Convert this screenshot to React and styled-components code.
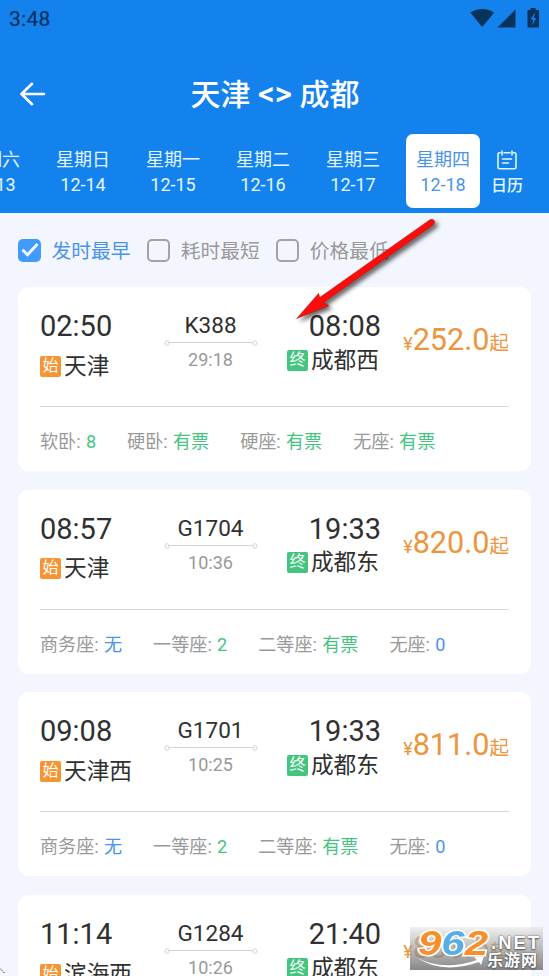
import React, { useState } from 'react';
import styled, { createGlobalStyle, ThemeProvider } from 'styled-components';

const theme = {
  color: {
    primary: '#1482ed',
    check: '#409bfd',
    link: '#4a94e8',
    page: '#f3f6ff',
    text: '#303030',
    grey: '#999999',
    orange: '#f79432',
    price: '#ed953c',
    green: '#43c57f',
    status: '#08335d',
  },
};

const days = [
  { week: '星期六', date: '12-13' },
  { week: '星期日', date: '12-14' },
  { week: '星期一', date: '12-15' },
  { week: '星期二', date: '12-16' },
  { week: '星期三', date: '12-17' },
  { week: '星期四', date: '12-18' },
];

const filters = ['发时最早', '耗时最短', '价格最低'];

const trains = [
  {
    code: 'K388',
    start: '02:50',
    end: '08:08',
    from: '天津',
    to: '成都西',
    duration: '29:18',
    price: '252.0',
    seats: [
      ['软卧', '8'],
      ['硬卧', '有票'],
      ['硬座', '有票'],
      ['无座', '有票'],
    ],
  },
  {
    code: 'G1704',
    start: '08:57',
    end: '19:33',
    from: '天津',
    to: '成都东',
    duration: '10:36',
    price: '820.0',
    seats: [
      ['商务座', '无'],
      ['一等座', '2'],
      ['二等座', '有票'],
      ['无座', '0'],
    ],
  },
  {
    code: 'G1701',
    start: '09:08',
    end: '19:33',
    from: '天津西',
    to: '成都东',
    duration: '10:25',
    price: '811.0',
    seats: [
      ['商务座', '无'],
      ['一等座', '2'],
      ['二等座', '有票'],
      ['无座', '0'],
    ],
  },
  {
    code: 'G1284',
    start: '11:14',
    end: '21:40',
    from: '滨海西',
    to: '成都东',
    duration: '10:26',
    price: '803.5',
    seats: [
      ['商务座', '无'],
      ['一等座', '2'],
      ['二等座', '有票'],
      ['无座', '0'],
    ],
  },
];

const StatusIcons = () => (
  <svg width="72" height="24" viewBox="0 0 72 24" fill={theme.color.status}>
    <path d="M1.500 4.700C8-.2 18.500-.2 25 4.700L13.200 19Z" />
    <path d="M28.500 19.400H46.500V1.600Z" />
    <path d="M61.500 0h5v2h3.500v17.500H58.500V2h3Z" />
    <path d="M65.500 5L61.500 11.500h2.700l-1 6 4-7.500h-2.600l1.400-5Z" fill={theme.color.primary} />
  </svg>
);

const BackIcon = () => (
  <svg width="26" height="24" viewBox="0 0 26 24" fill="none" stroke="#fff" strokeWidth="2.6" strokeLinecap="round" strokeLinejoin="round">
    <path d="M24 12H2M12 1.800L1.500 12L12 22.200" />
  </svg>
);

const CalendarIcon = () => (
  <svg width="20" height="20" viewBox="0 0 20 20" fill="none" stroke="#e4f6ff" strokeWidth="1.6" strokeLinecap="round">
    <path d="M3.200 2.800H2.500Q1 2.800 1 4.300V17Q1 18.700 2.700 18.700H17.300Q19 18.700 19 17V4.300Q19 2.800 17.500 2.800H16.500M7 2.800H13" />
    <path d="M5 1V5M15 1V5M5.500 9H14.500M5.500 13H11.500" />
  </svg>
);

const RouteLine = () => (
  <svg width="94" height="8" viewBox="0 0 94 8" fill="#fff" stroke="#d4d4d4">
    <path d="M4 3.500H90" />
    <ellipse cx="3" cy="4" rx="2" ry="2.300" />
    <ellipse cx="91" cy="4" rx="2" ry="2.300" />
  </svg>
);

const Arrow = () => (
  <PointerArrow width="170" height="130" viewBox="280 210 170 130">
    <path
      d="M430.300 219.400Q433.500 218.400 434.600 221.300Q435.100 223.400 433.200 224.900L324 302.300L328.700 305.800L296.700 318.500L318.700 293.300L319.600 297.600Z"
      fill="#fb0d0d"
      stroke="#a81512"
      strokeWidth="0.5"
    />
  </PointerArrow>
);

const seatColor = (count) => (count === '无' || count === '0' ? theme.color.link : theme.color.green);

const TrainCard = ({ train }) => (
  <Card>
    <Trip>
      <Departure>
        <Time>{train.start}</Time>
        <Station $top={10}>
          <Tag $bg={theme.color.orange}>始</Tag>
          <StationName>{train.from}</StationName>
        </Station>
      </Departure>
      <Route>
        <Code>{train.code}</Code>
        <RouteLine />
        <Duration>{train.duration}</Duration>
      </Route>
      <Arrival>
        <Time>{train.end}</Time>
        <Station $top={4}>
          <Tag $bg={theme.color.green}>终</Tag>
          <StationName>{train.to}</StationName>
        </Station>
      </Arrival>
      <Price>
        <Small>¥</Small>
        {train.price}
        <Suffix>起</Suffix>
      </Price>
    </Trip>
    <Seats>
      {train.seats.map(([name, count]) => (
        <Seat key={name}>
          {name}: <Count $color={seatColor(count)}>{count}</Count>
        </Seat>
      ))}
    </Seats>
  </Card>
);

const App = () => {
  const [day, setDay] = useState('12-18');
  const [filter, setFilter] = useState('发时最早');

  return (
    <ThemeProvider theme={theme}>
      <GlobalStyle />
      <Screen>
        <Header>
          <StatusBar>
            <Clock>3:48</Clock>
            <StatusIcons />
          </StatusBar>
          <TitleBar>
            <BackIcon />
            <Title>
              天津 <Swap>&lt;&gt;</Swap> 成都
            </Title>
          </TitleBar>
          <DateBar>
            <DayList>
              {days.map((item) => (
                <Day key={item.date} $active={item.date === day} onClick={() => setDay(item.date)}>
                  <span>{item.week}</span>
                  <DayDate>{item.date}</DayDate>
                </Day>
              ))}
            </DayList>
            <CalendarButton>
              <CalendarIcon />
              日历
            </CalendarButton>
          </DateBar>
        </Header>
        <Filters>
          {filters.map((name) => (
            <Filter key={name} $active={name === filter} onClick={() => setFilter(name)}>
              <Box $active={name === filter}>
                {name === filter ? (
                  <svg width="18" height="16" viewBox="0 0 18 16" fill="none" stroke="#fff" strokeWidth="2.8">
                    <path d="M1.500 7.800L6.500 12.800L16.500 2" />
                  </svg>
                ) : null}
              </Box>
              <FilterName>{name}</FilterName>
            </Filter>
          ))}
        </Filters>
        <List>
          {trains.map((train) => (
            <TrainCard key={train.code} train={train} />
          ))}
        </List>
        <Arrow />
        <Watermark>
          <Brand>
            <Digit $color="#f7902c">9</Digit>
            <Digit $color="#55aee6">6</Digit>
            <Digit $color="#f7902c">2</Digit>
          </Brand>
          <Swoosh width="70" height="14" viewBox="0 0 70 14">
            <path d="M1 1Q27 16 62 4L59 1L69 0L66 9L64 6Q27 19 1 1Z" fill="#fff" />
          </Swoosh>
          <Net>.NET</Net>
          <SiteName>乐游网</SiteName>
        </Watermark>
        <Corner width="5" height="8" viewBox="0 0 5 8">
          <path d="M0 .5L4.500 5" stroke="#222" strokeDasharray="1.500 1" />
        </Corner>
      </Screen>
    </ThemeProvider>
  );
};
export default App;

const GlobalStyle = createGlobalStyle`
  * {
    box-sizing: border-box;
  }
  body {
    margin: 0;
    overflow: hidden;
    font-family: Roboto, 'Noto Sans CJK SC', sans-serif;
  }
  svg {
    display: block;
    flex-shrink: 0;
  }
`;

const Screen = styled.div`
  position: relative;
  width: 549px;
  height: 976px;
  overflow: hidden;
  background-color: ${({ theme }) => theme.color.page};
`;

const Header = styled.header`
  height: 213px;
  background-color: ${({ theme }) => theme.color.primary};
`;

const StatusBar = styled.div`
  display: flex;
  justify-content: space-between;
  height: 54px;
  padding: 8px 8px 0 9px;
`;

const Clock = styled.span`
  font-size: 21px;
  line-height: 23px;
  letter-spacing: 0.3px;
  color: ${({ theme }) => theme.color.status};
  -webkit-text-stroke: 0.2px ${({ theme }) => theme.color.status};
`;

const TitleBar = styled.div`
  display: flex;
  align-items: center;
  height: 80px;
  padding-left: 20px;
`;

const Title = styled.h1`
  flex: 1;
  margin: 2px 45px 0 0;
  font-size: 30px;
  font-weight: 500;
  line-height: 40px;
  text-align: center;
  color: #fff;
`;

const Swap = styled.span`
  font-size: 33px;
  line-height: 30px;
`;

const DateBar = styled.div`
  display: flex;
  height: 74px;
`;

const DayList = styled.div`
  display: flex;
  justify-content: flex-end;
  gap: 16px;
  width: 480px;
  overflow: hidden;
`;

const Day = styled.div`
  display: flex;
  flex-direction: column;
  flex-shrink: 0;
  align-items: center;
  width: 74px;
  height: 74px;
  padding-top: 13px;
  border-radius: 7px;
  font-size: 18px;
  line-height: 26px;
  cursor: pointer;
  color: ${({ $active, theme }) => ($active ? theme.color.link : '#e4f6ff')};
  background-color: ${({ $active }) => ($active ? '#fff' : 'transparent')};
`;

const DayDate = styled.span`
  line-height: 24px;
`;

const CalendarButton = styled.div`
  display: flex;
  flex-direction: column;
  align-items: center;
  width: 54px;
  padding-top: 16px;
  font-size: 16px;
  font-weight: 500;
  line-height: 32px;
  color: #e4f6ff;
`;

const Filters = styled.div`
  display: flex;
  gap: 16.5px;
  height: 74px;
  padding: 0 18px;
  align-items: center;
`;

const Filter = styled.div`
  display: flex;
  align-items: center;
  gap: 10.5px;
  line-height: 28px;
  cursor: pointer;
  color: ${({ $active, theme }) => ($active ? theme.color.link : theme.color.grey)};
`;

const FilterName = styled.span`
  padding-top: 3px;
  font-size: 19.8px;
`;

const Box = styled.span`
  display: flex;
  align-items: center;
  justify-content: center;
  width: 23px;
  height: 23px;
  border: ${({ $active }) => ($active ? 'none' : '2px solid #a2a3a6')};
  border-radius: 5px;
  background-color: ${({ $active, theme }) => ($active ? theme.color.check : 'transparent')};
`;

const List = styled.main`
  display: flex;
  flex-direction: column;
  gap: 18.7px;
  padding: 0 18px;
`;

const Card = styled.article`
  flex-shrink: 0;
  height: 184px;
  padding: 0 22px;
  border-radius: 11px;
  background-color: #fff;
`;

const Trip = styled.div`
  display: flex;
  height: 120px;
  padding-top: 22px;
  border-bottom: 1px solid #d8d8d8;
`;

const Departure = styled.div`
  width: 124px;
`;

const Route = styled.div`
  display: flex;
  flex-direction: column;
  align-items: center;
  width: 93px;
`;

const Arrival = styled.div`
  display: flex;
  flex-direction: column;
  align-items: flex-end;
  width: 124px;
`;

const Time = styled.div`
  font-size: 29px;
  line-height: 34px;
  color: ${({ theme }) => theme.color.text};
`;

const Station = styled.div`
  display: flex;
  align-items: center;
  gap: 3px;
  height: 26px;
  margin: ${({ $top }) => $top}px 2px 0 0;
  font-size: 22.7px;
  white-space: nowrap;
  color: ${({ theme }) => theme.color.text};
`;

const StationName = styled.span`
  line-height: 26px;
  padding-top: 1px;
`;

const Tag = styled.span`
  width: 21px;
  height: 21px;
  border-radius: 2px;
  font-size: 16px;
  line-height: 20px;
  text-align: center;
  color: #fff;
  background-color: ${({ $bg }) => $bg};
`;

const Code = styled.div`
  height: 30px;
  font-size: 22.5px;
  line-height: 33px;
  color: ${({ theme }) => theme.color.text};
`;

const Duration = styled.div`
  margin-top: 2px;
  font-size: 18px;
  line-height: 22px;
  color: ${({ theme }) => theme.color.grey};
`;

const Price = styled.div`
  display: flex;
  flex: 1;
  align-items: baseline;
  justify-content: flex-end;
  padding-top: 13px;
  font-size: 30.6px;
  line-height: 36px;
  white-space: nowrap;
  color: ${({ theme }) => theme.color.price};
`;

const Small = styled.span`
  font-size: 18px;
`;

const Suffix = styled.span`
  font-size: 19.5px;
  line-height: 20px;
`;

const Seats = styled.div`
  display: flex;
  gap: 31px;
  height: 64px;
  padding-top: 22px;
`;

const Seat = styled.span`
  font-size: 18.1px;
  line-height: 26px;
  white-space: pre;
  color: ${({ theme }) => theme.color.grey};
`;

const Count = styled.span`
  margin-left: 0.8px;
  color: ${({ $color }) => $color};
`;

const PointerArrow = styled.svg`
  position: absolute;
  top: 210px;
  left: 280px;
  filter: drop-shadow(3px 3px 2px rgba(0, 0, 0, 0.6));
`;

const Watermark = styled.div`
  position: absolute;
  left: 410px;
  top: 927px;
  width: 133px;
  height: 43px;
  background: linear-gradient(rgba(225, 225, 225, 0.5), rgba(115, 115, 115, 0.85));
`;

const Brand = styled.div`
  position: absolute;
  left: 8px;
  top: -2px;
  display: flex;
  font-family: 'Liberation Sans', sans-serif;
  font-size: 35px;
  font-weight: 700;
  font-style: italic;
  line-height: 36px;
  transform: scaleX(1.2);
  transform-origin: left;
`;

const Digit = styled.span`
  color: ${({ $color }) => $color};
  -webkit-text-stroke: 3px #fff;
  paint-order: stroke fill;
`;

const Swoosh = styled.svg`
  position: absolute;
  left: 5px;
  top: 29px;
`;

const Net = styled.div`
  position: absolute;
  left: 81px;
  top: 5px;
  font-family: 'Liberation Sans', sans-serif;
  font-size: 18.5px;
  font-weight: 700;
  line-height: 21px;
  letter-spacing: 2px;
  color: #fff;
  text-shadow: 0 0 2px #555, 0 1px 2px #555;
`;

const SiteName = styled.div`
  position: absolute;
  left: 77px;
  top: 25px;
  font-size: 16px;
  font-weight: 700;
  line-height: 17px;
  letter-spacing: 1px;
  white-space: nowrap;
  color: #fff;
  text-shadow: 0 0 2px #555, 0 1px 2px #555;
`;

const Corner = styled.svg`
  position: absolute;
  left: 0;
  bottom: 0;
`;
